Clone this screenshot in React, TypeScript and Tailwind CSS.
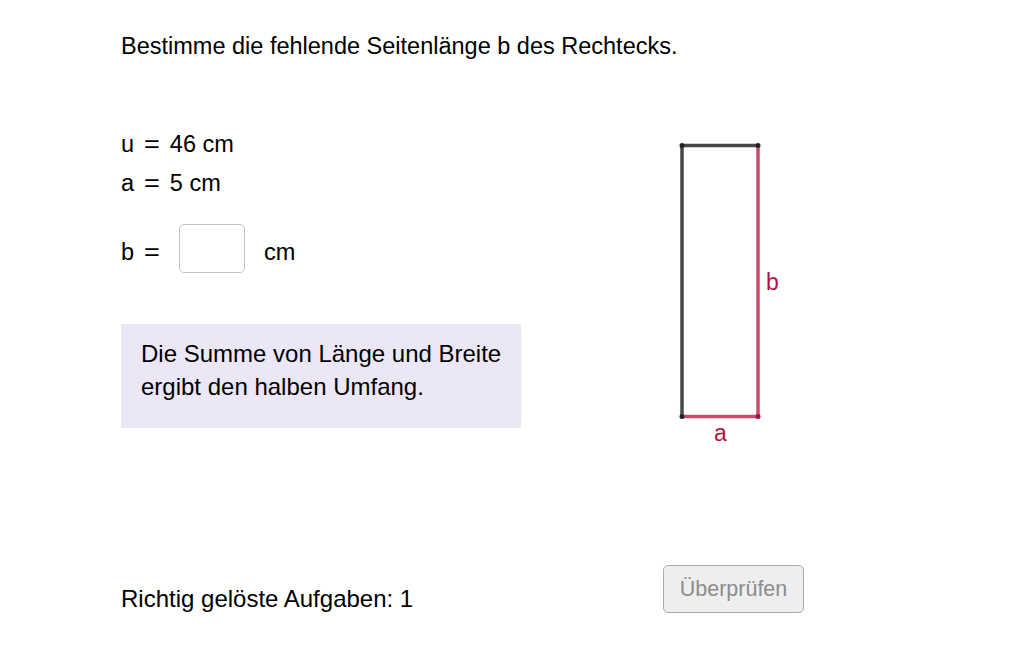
export default function App() {
  return (
    <div className="w-[1032px] h-[645px] bg-white pl-[121px] pt-[30px] text-black text-[23.5px] font-['Liberation_Sans',sans-serif] overflow-hidden">
      {/* Aufgabe */}
      <p className="leading-[32px]">Bestimme die fehlende Seitenlänge b des Rechtecks.</p>

      <div className="flex mt-[62.5px]">
        {/* linke Spalte */}
        <div className="w-[400px] flex flex-col">
          <div className="h-[39px] flex items-center pt-[2px]">
            <span>u</span>
            <span className="mx-[11px] inline-block scale-x-[1.15]">=</span>
            <span>46 cm</span>
          </div>
          <div className="h-[39px] flex items-center pt-[2px]">
            <span>a</span>
            <span className="mx-[11px] inline-block scale-x-[1.15]">=</span>
            <span>5 cm</span>
          </div>

          <div className="flex items-center mt-[21.5px] h-[49px]">
            <span className="w-[58px] pt-[8px] flex">
              <span>b</span>
              <span className="ml-[11px] inline-block scale-x-[1.15]">=</span>
            </span>
            <div className="w-[66px] h-[49px] rounded-[5px] border border-[#c4c4c4] bg-white"></div>
            <span className="ml-[19px] pt-[8px]">cm</span>
          </div>

          {/* Hinweis */}
          <div className="mt-[51px] h-[104px] bg-[#ebe7f7] pl-[20px] pt-[12.5px] leading-[33px] text-[24px]">
            Die Summe von Länge und Breite
            <br />
            ergibt den halben Umfang.
          </div>
        </div>

        {/* Zeichnung */}
        <svg className="ml-[139px]" width="140" height="330" viewBox="0 0 140 330">
          <line x1="22" y1="20.5" x2="22" y2="291.5" stroke="#474747" strokeWidth="3.5" />
          <line x1="22" y1="20.5" x2="98" y2="20.5" stroke="#474747" strokeWidth="3.5" />
          <line x1="98" y1="20.5" x2="98" y2="291.5" stroke="#c94c68" strokeWidth="3.5" />
          <line x1="22" y1="291.5" x2="98" y2="291.5" stroke="#c94c68" strokeWidth="3.5" />
          <circle cx="22" cy="20.5" r="2.5" fill="#222" />
          <circle cx="98" cy="20.5" r="2.5" fill="#222" />
          <circle cx="22" cy="291.5" r="2.5" fill="#222" />
          <circle cx="98" cy="291.5" r="2.5" fill="#a8123a" />
          <text x="106" y="165" fill="#b0173f" fontSize="23" fontFamily="Liberation Sans, sans-serif">b</text>
          <text x="54" y="316" fill="#b0173f" fontSize="23" fontFamily="Liberation Sans, sans-serif">a</text>
        </svg>
      </div>

      {/* Fußzeile */}
      <div className="flex items-start mt-[110.5px]">
        <span className="w-[542px] mt-[18px] leading-[32px] text-[24px]">Richtig gelöste Aufgaben: 1</span>
        <button className="w-[141px] h-[48px] rounded-[5px] border border-[#ababab] bg-[#eeeeee] text-[#8c8c8c] text-[21.5px]">
          Überprüfen
        </button>
      </div>
    </div>
  );
}
